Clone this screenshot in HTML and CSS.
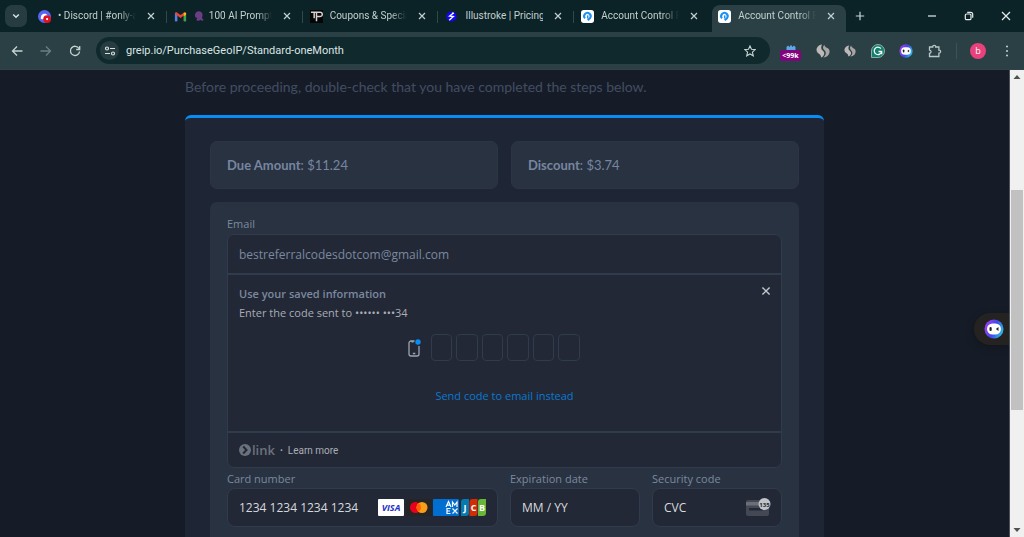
FILE: index.html
```html
<!DOCTYPE html>
<html lang="en">
<head>
<meta charset="utf-8">
<title>Account Control Panel</title>
<link rel="stylesheet" href="styles.css">
</head>
<body>
<svg class="defs" aria-hidden="true">
  <symbol id="x" viewBox="0 0 10 10"><path d="M2 2l6 6M8 2L2 8" stroke="currentColor" stroke-width="1.2" fill="none"/></symbol>
  <symbol id="greip" viewBox="0 0 14 14"><rect width="14" height="14" rx="3" fill="#fff"/><path d="M4.300 9A3.500 3.500 0 1 1 9.800 8.600L7.300 11" fill="none" stroke="#1d8ff2" stroke-width="2.200"/><path d="M7.200 5.800v3.400" fill="none" stroke="#1d8ff2" stroke-width="1.600"/></symbol>
  <symbol id="bot" viewBox="0 0 20 20"><circle cx="10" cy="10" r="9.500" fill="url(#botg)"/><rect x="3" y="4.500" width="14" height="11" rx="5.500" fill="#fff"/><rect x="5.500" y="8" width="2.200" height="4" rx="1" fill="#222"/><path d="M14.500 8l-2.600 2 2.600 2z" fill="#222"/></symbol>
  <symbol id="swirl" viewBox="0 0 14 14"><path d="M6 .500C2 1 .3 4 .6 6.500c.2 1.500 1.200 2.500 2.700 3.400 1.200.8 1.700 1.700 1.700 3.600 3.500-1.300 4.100-4.700 2.100-6.500C5 5.300 4.600 3.500 6 .5z" fill="#bdb9b9"/><path d="M8.300.7c-1.800 1.800-1.600 3.900-.1 5.400 2.400 2.200 2.100 5-.9 7.400 4.400-.2 6.600-3.300 6.200-6.700-.2-1.500-1-2.400-2.700-3.100-1.400-.7-2.200-1.500-2.500-3z" fill="#a9a5a5"/></symbol>
  <defs><linearGradient id="botg" x1="0" y1="0.300" x2="1" y2="0.700"><stop offset="0" stop-color="#a53df5"/><stop offset=".5" stop-color="#4048e6"/><stop offset="1" stop-color="#2bc4e8"/></linearGradient></defs>
</svg>
<div class="window">
  <header class="tabstrip">
    <button class="tab-search" aria-label="Search tabs"><svg class="i10" viewBox="0 0 10 10"><path d="M2.200 3.500L5 6.300l2.800-2.800" stroke="#d5e0df" stroke-width="1.500" fill="none"/></svg></button>
    <nav class="tabs">
      <div class="tab">
        <svg class="fav" viewBox="0 0 14 14"><circle cx="7" cy="7" r="7" fill="#5865f2"/><path d="M3 9.500c0-3 .8-5.500 4-5.500s4 2.500 4 5.500c-1 .8-7 .8-8 0z" fill="#fff"/><circle cx="9.800" cy="9.800" r="4.200" fill="#e01222"/><circle cx="9.800" cy="9.800" r="1.200" fill="#fff"/></svg>
        <span class="title">• Discord | #only-ai</span><button class="close" aria-label="Close tab"><svg class="i10"><use href="#x"/></svg></button>
      </div>
      <div class="tab">
        <svg class="fav" viewBox="0 0 14 14"><path d="M1 3v9h2.500V6L7 8.600 10.500 6v6H13V3l-1.500-.8L7 5.500 2.500 2.200z" fill="#ea4335"/><path d="M1 4v8h2.500V6z" fill="#4285f4"/><path d="M13 4v8h-2.500V6z" fill="#34a853"/><path d="M13 3v2l-2.500 1.800V3z" fill="#fbbc04"/></svg>
        <svg class="octo" viewBox="0 0 10 12"><path d="M1 5c0-5 7-5 7.500-.5.2 1.500-.6 2.500-.3 3.800.3 1.200 1.800.7 1.300 1.700-.8 1.200-2.500.6-3.200-.3C5.500 11 3 11 2 9.800c1-.2 1.500-1 .8-2C1.500 8 .8 6.500 1 5z" fill="#6b3d85"/></svg>
        <span class="title">100 AI Prompts</span><button class="close" aria-label="Close tab"><svg class="i10"><use href="#x"/></svg></button>
      </div>
      <div class="tab">
        <svg class="fav" viewBox="0 0 14 14"><rect width="14" height="14" fill="#050505"/><path d="M1 2.500h8M4.500 2.500V9M7 12V2.500h4a2 2 0 0 1 0 4.500H7" stroke="#d8d0d0" stroke-width="1.600" fill="none"/></svg>
        <span class="title">Coupons &amp; Specials</span><button class="close" aria-label="Close tab"><svg class="i10"><use href="#x"/></svg></button>
      </div>
      <div class="tab">
        <svg class="fav" viewBox="0 0 14 14"><circle cx="7" cy="7" r="5.500" fill="#1206f5"/><path d="M9.500 3L5 6.500l4 .5-4.500 4M7.500 3.500h2" stroke="#fff" stroke-width="1.400" fill="none"/></svg>
        <span class="title whole">Illustroke | Pricing</span><button class="close" aria-label="Close tab"><svg class="i10"><use href="#x"/></svg></button>
      </div>
      <div class="tab last">
        <svg class="fav"><use href="#greip"/></svg>
        <span class="title">Account Control Panel</span><button class="close" aria-label="Close tab"><svg class="i10"><use href="#x"/></svg></button>
      </div>
      <div class="tab active">
        <svg class="fav"><use href="#greip"/></svg>
        <span class="title">Account Control Panel</span><button class="close" aria-label="Close tab"><svg class="i10"><use href="#x"/></svg></button>
      </div>
    </nav>
    <button class="new-tab" aria-label="New tab"><svg class="i10" viewBox="0 0 10 10"><path d="M5 .800v8.400M.8 5h8.400" stroke="#c9d6d5" stroke-width="1.200"/></svg></button>
    <div class="win-buttons">
      <button aria-label="Minimize"><svg class="i10" viewBox="0 0 10 10"><path d="M1 5h8" stroke="#e6eded" stroke-width="1.200"/></svg></button>
      <button aria-label="Restore"><svg class="i10" viewBox="0 0 10 10"><rect x="1.300" y="3" width="5.700" height="5.700" rx="1.300" fill="none" stroke="#e6eded" stroke-width="1.200"/><path d="M3.200 1.300h3.500a2 2 0 0 1 2 2v3.500" fill="none" stroke="#e6eded" stroke-width="1.200"/></svg></button>
      <button aria-label="Close window"><svg class="i10" viewBox="0 0 10 10"><path d="M1 1l8 8M9 1L1 9" stroke="#e6eded" stroke-width="1.200"/></svg></button>
    </div>
  </header>

  <div class="toolbar">
    <div class="nav-buttons">
      <button aria-label="Back"><svg class="i12" viewBox="0 0 12 12"><path d="M11.500 6H1.500M6 1.500L1.500 6 6 10.500" fill="none" stroke="#c5d3d2" stroke-width="1.300"/></svg></button>
      <button aria-label="Forward"><svg class="i12" viewBox="0 0 12 12"><path d="M.5 6h10M6 1.500L10.500 6 6 10.500" fill="none" stroke="#6b7f80" stroke-width="1.300"/></svg></button>
      <button aria-label="Reload"><svg class="i12" viewBox="0 0 12 12"><path d="M10 3.500A4.600 4.600 0 1 0 10.600 6.500M10.700 1v3.500H7.200" fill="none" stroke="#c5d3d2" stroke-width="1.300"/></svg></button>
    </div>
    <div class="omnibox">
      <button class="site-info" aria-label="Site information"><svg class="i12" viewBox="0 0 12 12"><g fill="none" stroke="#d5e0df" stroke-width="1.200"><circle cx="3" cy="3.500" r="1.500"/><path d="M6 3.500h5M1 8.500h5"/><circle cx="9" cy="8.500" r="1.500"/></g></svg></button>
      <input class="url" type="text" aria-label="Address" value="greip.io/PurchaseGeoIP/Standard-oneMonth">
      <button class="star" aria-label="Bookmark"><svg class="i12" viewBox="0 0 12 12"><path d="M6 .900l1.500 3.400 3.700.3-2.800 2.500.9 3.700L6 8.900l-3.300 1.900.9-3.700L.8 4.600l3.700-.3z" fill="none" stroke="#c5d3d2" stroke-width="1.100"/></svg></button>
    </div>
    <div class="extensions">
      <button class="rank" aria-label="Site rank"><svg class="rank-icon" viewBox="0 0 14 8"><path d="M1 8V4l2-2 2 2 2-3 2 3 2-2 2 2v4z" fill="#5fa7e6"/></svg><span class="rank-badge">&lt;99k</span></button>
      <button aria-label="Extension"><svg class="i14"><use href="#swirl"/></svg></button>
      <button aria-label="Extension"><svg class="i12"><use href="#swirl"/></svg></button>
      <button aria-label="Grammar extension"><svg class="i14" viewBox="0 0 14 14"><path d="M.5 7A6.500 6.500 0 1 1 7 13.500H.5z" fill="#12806a" stroke="#a8c4be" stroke-width=".800"/><path d="M9.800 4.500A3.700 3.700 0 1 0 10.600 7.500H7.500M10.700 7.500v2.700" fill="none" stroke="#fff" stroke-width="1.300"/></svg></button>
      <button aria-label="Assistant extension"><svg class="i14"><use href="#bot"/></svg></button>
      <button aria-label="Extensions"><svg class="i14" viewBox="0 0 14 14"><path d="M1.500 3h3.200c-.3-2.300 3.300-2.300 3 0h3.200v3.200c2.300-.2 2.300 3 0 2.900v3.400H1.500V9.300c2.100-.3 2.100-2.800 0-3.100z" fill="none" stroke="#b9c8c7" stroke-width="1.300"/></svg></button>
    </div>
    <div class="profile">
      <button class="avatar" aria-label="Profile">b</button>
      <button aria-label="Menu"><svg class="i12" viewBox="0 0 12 12" fill="#c5d3d2"><circle cx="6" cy="1.500" r="1"/><circle cx="6" cy="6" r="1"/><circle cx="6" cy="10.500" r="1"/></svg></button>
    </div>
  </div>

  <div class="viewport">
    <main class="page">
      <div class="content">
      <p class="notice">Before proceeding, double-check that you have completed the steps below.</p>
      <section class="card">
        <div class="summary">
          <div class="box"><b>Due Amount</b>: $11.24</div>
          <div class="box"><b>Discount</b>: $3.74</div>
        </div>
        <form class="form">
          <label for="email">Email</label>
          <div class="group">
            <input id="email" class="email" type="email" value="bestreferralcodesdotcom@gmail.com">
            <div class="saved">
              <div class="saved-head">
                <div><h2>Use your saved information</h2><p>Enter the code sent to •••••• •••34</p></div>
                <button type="button" class="dismiss" aria-label="Dismiss"><svg class="i12"><use href="#x"/></svg></button>
              </div>
              <div class="otp">
                <svg class="phone" viewBox="0 0 14 20"><path d="M7.500 3H4a2 2 0 0 0-2 2v11a2 2 0 0 0 2 2h6a2 2 0 0 0 2-2V8M5.800 15.500h2.500" fill="none" stroke="#9ea4ae" stroke-width="1.300"/><path d="M4.500 3h2v1.500h-2z" fill="#9ea4ae"/><circle cx="11" cy="4" r="2.700" fill="#0a8cf5"/></svg>
                <div class="digits">
                  <input aria-label="Digit 1" maxlength="1"><input aria-label="Digit 2" maxlength="1"><input aria-label="Digit 3" maxlength="1"><input aria-label="Digit 4" maxlength="1"><input aria-label="Digit 5" maxlength="1"><input aria-label="Digit 6" maxlength="1">
                </div>
              </div>
              <button type="button" class="send">Send code to email instead</button>
            </div>
            <div class="link-foot">
              <svg class="link-icon" viewBox="0 0 12 12"><circle cx="6" cy="6" r="6" fill="#6c727c"/><path d="M4.200 2.500L7.500 6 4.200 9.500" fill="none" stroke="#222836" stroke-width="2"/></svg>
              <span class="link-word">link</span><span class="dot">·</span><a href="#learn">Learn more</a>
            </div>
          </div>
          <div class="fields">
            <div class="field">
              <label for="number">Card number</label>
              <div class="control">
                <input id="number" type="text" placeholder="1234 1234 1234 1234">
                <svg class="brands" viewBox="0 0 109 17">
                  <rect width="26" height="17" rx="1" fill="#fff"/><text x="13" y="12" class="visa">VISA</text>
                  <rect x="28" width="26" height="17" rx="1" fill="#252525"/><circle cx="37.500" cy="8.500" r="5.500" fill="#eb001b"/><circle cx="44" cy="8.500" r="5.500" fill="#f79e1b"/><path d="M40.750 4.100a5.500 5.500 0 0 1 0 8.800 5.500 5.500 0 0 1 0-8.800z" fill="#ff5f00"/>
                  <rect x="55" width="26" height="17" rx="1" fill="#016fd0"/><path d="M68 8l2.500-5.500L73 8M69 6.200h3M74.500 8V3l2.300 3L79 3v5M72.500 9.500H69v5h3.500M69 12h3M74.500 9.500l5 5M79.500 9.500l-5 5" fill="none" stroke="#fff" stroke-width="1.200"/>
                  <path d="M83 3a3 3 0 0 1 3-3h5v14a3 3 0 0 1-3 3h-5z" fill="#047ab1"/><path d="M91.500 3a3 3 0 0 1 3-3h5v14a3 3 0 0 1-3 3h-5z" fill="#d42d06"/><path d="M100 3a3 3 0 0 1 3-3h5v14a3 3 0 0 1-3 3h-5z" fill="#67b637"/>
                  <text x="87" y="12" class="jcb">J</text><text x="95.500" y="12" class="jcb">C</text><text x="104" y="12" class="jcb">B</text>
                </svg>
              </div>
            </div>
            <div class="field">
              <label for="exp">Expiration date</label>
              <div class="control"><input id="exp" type="text" placeholder="MM / YY"></div>
            </div>
            <div class="field">
              <label for="cvc">Security code</label>
              <div class="control"><input id="cvc" type="text" placeholder="CVC">
                <svg class="cvc-icon" viewBox="0 0 25 19"><rect y="2" width="23" height="16" rx="2" fill="#434854"/><path d="M0 4h23v3.500H0z" fill="#6a6e78"/><path d="M3 10h14v2.500H3z" fill="#222836"/><circle cx="18.500" cy="6" r="6" fill="#c0c3c8"/><text x="18.500" y="8.500" class="cvc-text">135</text></svg>
              </div>
            </div>
          </div>
        </form>
      </section>
      </div>
      <button class="assistant" aria-label="Open assistant"><svg class="i20"><use href="#bot"/></svg></button>
    </main>
    <div class="scrollbar" aria-hidden="true">
      <svg class="arrow" viewBox="0 0 14 14"><path d="M3.500 9L7 5l3.500 4z" fill="#505050"/></svg>
      <div class="track"><div class="thumb"></div></div>
      <svg class="arrow" viewBox="0 0 14 14"><path d="M3.500 5L7 9l3.500-4z" fill="#505050"/></svg>
    </div>
  </div>
</div>
</body>
</html>
```

FILE: styles.css
```css
* { box-sizing: border-box; }
body { margin: 0; background: #161c27; font-family: "Open Sans", "Noto Sans", sans-serif; }
button { border: 0; padding: 0; margin: 0; background: none; font: inherit; color: inherit; display: flex; align-items: center; justify-content: center; }
input { font: inherit; color: inherit; border: 0; padding: 0; margin: 0; min-width: 0; background: none; outline: 0; }
svg { display: block; flex: none; }
.defs { position: absolute; width: 0; height: 0; }
.i10 { width: 10px; height: 10px; }
.i12 { width: 12px; height: 12px; }
.i14 { width: 14px; height: 14px; }
.i20 { width: 20px; height: 20px; }

.window { height: 100vh; display: flex; flex-direction: column; overflow: hidden; }

.tabstrip { display: flex; height: 32px; flex: none; background: #0b2226; color: #c3d0cf; font-family: Roboto, sans-serif; font-size: 10px; }
.tab-search { width: 22px; height: 22px; margin: 5px 3px 0 5px; border-radius: 7px; background: #263c40; }
.tabs { display: flex; flex: 0 1 816px; min-width: 0; }
.tab { flex: 1 1 0; min-width: 0; display: flex; align-items: center; gap: 7px; padding: 0 10px 0 8px; position: relative; }
.tab:not(.last):not(.active)::after { content: ""; position: absolute; right: -1px; top: 11px; width: 1px; height: 12px; background: #32484b; }
.tab.active { margin-top: 5px; padding-bottom: 5px; border-radius: 8px 8px 0 0; background: #2a4044; margin-left: 3px; padding-left: 6px; }
.fav { width: 13px; height: 13px; }
.octo { width: 10px; height: 12px; margin-right: -2px; }
.title { flex: 1; min-width: 0; margin-right: 3px; overflow: hidden; white-space: nowrap; line-height: 16px; mask-image: linear-gradient(to right, #000 78%, transparent); }
.title.whole { mask-image: none; }
.new-tab { width: 28px; }
.win-buttons { display: flex; margin-left: auto; }
.win-buttons button { width: 37px; }

.toolbar { display: flex; align-items: center; height: 38px; flex: none; background: #2a4044; padding: 0 11px; border-bottom: 1px solid #314346; }
.nav-buttons { display: flex; gap: 17px; width: 85px; }
.omnibox { flex: 1; display: flex; align-items: center; height: 27px; padding: 0 14px 0 4px; border-radius: 14px; background: #10292d; color: #dbe5e4; font-family: Roboto, sans-serif; font-size: 11px; }
.site-info { width: 19px; height: 19px; border-radius: 50%; background: #263c40; }
.url { flex: 1; margin-left: 7px; }
.extensions { display: flex; align-items: center; justify-content: space-between; width: 162px; margin-left: 10px; }
.rank { width: 21px; flex-direction: column; margin-top: 4px; }
.rank-icon { width: 14px; height: 6px; }
.rank-badge { padding: 0 2px; border-radius: 2px; background: #82057f; color: #fff; font-size: 7px; line-height: 11px; font-weight: 700; }
.profile { display: flex; align-items: center; gap: 15px; margin-left: 14px; padding-left: 13px; border-left: 1px solid #3d5457; }
.avatar { width: 16px; height: 16px; border-radius: 50%; background: #e8417b; color: #fff; font-size: 9px; }

.viewport { flex: 1; min-height: 0; display: flex; }
.page { flex: 1; min-width: 0; position: relative; overflow: hidden; border-right: 1px solid #4b515b; font-size: 12px; color: #7b899f; }
.content { max-width: 639px; margin: 0 auto; padding-top: 8px; }
.notice { margin: 0 0 19px; font-family: Lato, sans-serif; font-size: 14px; line-height: 18px; color: #424d62; }
.card { border-top: 3px solid #0a8cf5; border-radius: 6px; background: #1e2636; padding: 23px 25px; }
.summary { display: grid; grid-template-columns: 1fr 1fr; gap: 13px; margin-bottom: 13px; }
.box { padding: 14px 16px; border: 1px solid #2c3545; border-radius: 7px; background: #293241; font-family: Lato, sans-serif; font-size: 13px; line-height: 18px; color: #7686a0; }
.form { padding: 14px 17px 30px; border-radius: 7px; background: #293241; }
label { display: block; font-size: 11px; line-height: 16px; }
.group { margin-top: 2px; border: 1px solid #303b4c; border-radius: 7px; background: #222836; }
.email { display: block; width: 100%; height: 38px; padding: 0 11px; }
.saved { border: solid #303b4c; border-width: 2px 0; height: 160px; padding: 10px 11px; }
.saved-head { display: flex; justify-content: space-between; align-items: flex-start; }
.saved h2 { margin: 0; font-size: 11px; line-height: 18px; font-weight: 600; }
.saved p { margin: 0; font-size: 11px; line-height: 19px; color: #a9adb5; }
.dismiss { color: #c4c7cc; margin-right: -2px; }
.otp { display: flex; justify-content: center; align-items: center; gap: 10px; margin: 12px 0 26px; padding-right: 23px; }
.phone { width: 14px; height: 20px; }
.digits { display: flex; gap: 4px; width: 149px; }
.digits input { flex: 1; height: 27px; border: 1px solid #303b4c; border-radius: 4px; text-align: center; }
.send { margin: 0 auto; color: #0b78cf; font-size: 11px; line-height: 18px; }
.link-foot { display: flex; align-items: center; height: 34px; padding: 0 11px; font-size: 10px; color: #a9adb5; }
.link-foot a { color: inherit; text-decoration: none; font-family: Roboto, sans-serif; }
.link-icon { width: 12px; height: 12px; }
.link-word { margin-left: 1px; font-size: 13px; line-height: 18px; font-weight: 600; color: #6c727c; }
.dot { margin: 0 5px; font-weight: 700; }
.fields { display: grid; grid-template-columns: 271px 1fr 1fr; gap: 12px; margin-top: 3px; }
.control { display: flex; align-items: center; gap: 4px; height: 39px; margin-top: 1px; padding: 0 10px 0 11px; border: 1px solid #303b4c; border-radius: 8px; background: #222836; color: #d8dade; }
.control input { flex: 1; width: 0; }
.control input::placeholder { color: #d8dade; opacity: 1; }
.brands { width: 109px; height: 17px; }
.cvc-icon { width: 25px; height: 19px; }
.visa { font: italic 700 9px "Open Sans", sans-serif; fill: #2430c8; text-anchor: middle; }
.jcb { font: 700 9px "Open Sans", sans-serif; fill: #fff; text-anchor: middle; }
.cvc-text { font: 700 6px "Open Sans", sans-serif; fill: #222836; text-anchor: middle; }
.assistant { position: absolute; right: 0; top: 243px; width: 35px; height: 32px; border-radius: 16px 0 0 16px; background: #242322; padding-left: 4px; box-shadow: 0 2px 8px rgba(0, 0, 0, .3); }

.scrollbar { width: 14px; flex: none; display: flex; flex-direction: column; background: #f0f0f0; }
.arrow { width: 14px; height: 14px; }
.track { flex: 1; display: flex; padding: 106px 1px 0; }
.thumb { flex: 1; height: 66%; background: #c1c1c1; }
```
